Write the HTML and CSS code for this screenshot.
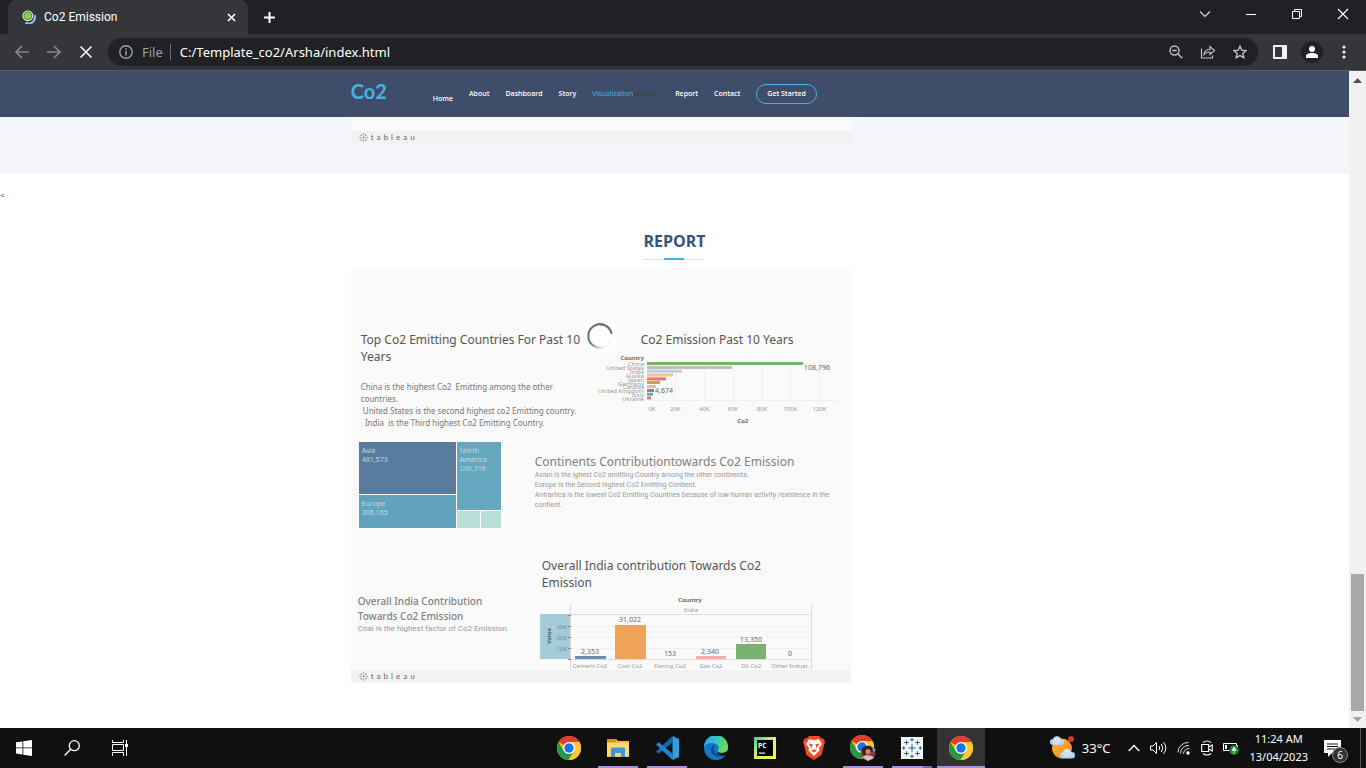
FILE: index.html
```html
<!DOCTYPE html>
<html lang="en">
<head>
<meta charset="utf-8">
<title>Co2 Emission</title>
<link rel="stylesheet" href="styles.css">
</head>
<body>
<svg width="0" height="0" class="defs" aria-hidden="true">
  <defs>
    <symbol id="chrome" viewBox="0 0 24 24">
      <circle cx="12" cy="12" r="12" fill="#fbc116"/>
      <path d="M12 12 1.6 6A12 12 0 0 1 22.4 6H12Z" fill="#e33b2e"/>
      <path d="M1.6 6A12 12 0 0 0 11.5 24L17.2 15 12 12 6.8 15Z" fill="#229a46"/>
      <path d="M22.4 6H12l5.2 9-5.7 9A12 12 0 0 0 22.4 6Z" fill="#fcc934"/>
      <circle cx="12" cy="12" r="6" fill="#fff"/>
      <circle cx="12" cy="12" r="4.7" fill="#1a73e8"/>
    </symbol>
    <symbol id="tableau" viewBox="0 0 24 24">
      <path d="M12 8v8M8 12h8M12 1v4M10 3h4M12 19v4M10 21h4M1 12h4M3 10v4M19 12h4M21 10v4M6 3.500v5M3.500 6h5M18 3.500v5M15.500 6h5M6 15.500v5M3.500 18h5M18 15.500v5M15.500 18h5" fill="none" stroke="currentColor" stroke-width="1.200"/>
    </symbol>
  </defs>
</svg>

<div class="tabstrip">
  <div class="tab">
    <svg class="favicon" viewBox="0 0 14 14"><path d="M12.500 5A6.300 6.300 0 0 1 3.500 12.700" fill="none" stroke="#8ab4f8" stroke-width="2.200"/><circle cx="5.800" cy="5.800" r="5.400" fill="#fff"/><circle cx="5.800" cy="5.800" r="4.600" fill="#5aa02c"/><circle cx="5.800" cy="5.800" r="2.600" fill="#8fc63f" stroke="#cfe8a8" stroke-width=".6"/></svg>
    <span class="tab-title">Co2 Emission</span>
    <button class="icon-btn" aria-label="Close tab"><svg width="9" height="9" viewBox="0 0 9 9"><path d="M1 1l7 7M8 1l-7 7" stroke="#fff" stroke-width="1.600"/></svg></button>
  </div>
  <button class="icon-btn new-tab" aria-label="New tab"><svg width="13" height="13" viewBox="0 0 13 13"><path d="M6.500 1v11M1 6.500h11" stroke="#fff" stroke-width="2"/></svg></button>
  <div class="window-controls">
    <button class="icon-btn" aria-label="Search tabs"><svg width="12" height="12" viewBox="0 0 12 12"><path d="M1 3.500l5 5 5-5" fill="none" stroke="#ddd" stroke-width="1.100"/></svg></button>
    <button class="icon-btn" aria-label="Minimize"><svg width="12" height="12" viewBox="0 0 12 12"><path d="M1 6.500h10" stroke="#fff"/></svg></button>
    <button class="icon-btn" aria-label="Restore"><svg width="12" height="12" viewBox="0 0 12 12"><path d="M1.500 3.500h7v7h-7zM3.500 3.500v-2h7v7h-2" fill="none" stroke="#fff"/></svg></button>
    <button class="icon-btn" aria-label="Close"><svg width="12" height="12" viewBox="0 0 12 12"><path d="M1 1l10 10M11 1L1 11" stroke="#fff" stroke-width="1.200"/></svg></button>
  </div>
</div>

<div class="toolbar">
  <button class="icon-btn nav-btn" aria-label="Back"><svg width="16" height="16" viewBox="0 0 16 16"><path d="M15 8H2M8 2L2 8l6 6" fill="none" stroke="#85878a" stroke-width="1.700"/></svg></button>
  <button class="icon-btn nav-btn" aria-label="Forward"><svg width="16" height="16" viewBox="0 0 16 16"><path d="M1 8h13M8 2l6 6-6 6" fill="none" stroke="#85878a" stroke-width="1.700"/></svg></button>
  <button class="icon-btn nav-btn" aria-label="Stop"><svg width="14" height="14" viewBox="0 0 14 14"><path d="M1.500 1.500l11 11M12.500 1.500l-11 11" stroke="#f1f1f1" stroke-width="1.700"/></svg></button>
  <div class="omnibox">
    <svg width="14" height="14" viewBox="0 0 14 14"><circle cx="7" cy="7" r="6.200" fill="none" stroke="#9aa0a6" stroke-width="1.400"/><path d="M7 6v4.500M7 3.300v1.500" stroke="#9aa0a6" stroke-width="1.500"/></svg>
    <label class="scheme" for="address">File</label>
    <input id="address" class="address" type="text" value="C:/Template_co2/Arsha/index.html">
    <button class="icon-btn" aria-label="Zoom"><svg width="14" height="14" viewBox="0 0 14 14"><circle cx="5.500" cy="5.500" r="4.500" fill="none" stroke="#bdc1c6" stroke-width="1.400"/><path d="M3.300 5.500h4.400M9 9l4.200 4.200" stroke="#bdc1c6" stroke-width="1.500"/></svg></button>
    <button class="icon-btn" aria-label="Share"><svg width="16" height="14" viewBox="0 0 16 14"><path d="M1.500 3.500v9.500h11V10.500M4 9.500c.3-3.500 2.500-5 6-5V1.500l4.500 4-4.500 4V7C7.500 7 5.500 7.500 4 9.500Z" fill="none" stroke="#bdc1c6" stroke-width="1.200"/></svg></button>
    <button class="icon-btn" aria-label="Bookmark"><svg width="14" height="14" viewBox="0 0 14 14"><path d="M7 1.300l1.700 3.900 4.300.4-3.200 2.800 1 4.200L7 10.400l-3.800 2.200 1-4.200L1 5.600l4.300-.4Z" fill="none" stroke="#c8cacd" stroke-width="1.300"/></svg></button>
  </div>
  <button class="icon-btn side" aria-label="Side panel"><svg width="14" height="14" viewBox="0 0 14 14"><path d="M0 0h14v14H0zM2 2v10h7V2z" fill="#f1f3f4" fill-rule="evenodd"/></svg></button>
  <button class="icon-btn profile" aria-label="Profile"><svg width="12" height="12" viewBox="0 0 12 12"><circle cx="6" cy="3" r="3" fill="#fff"/><path d="M0 12V10c0-2 3-3 6-3s6 1 6 3v2z" fill="#fff"/></svg></button>
  <button class="icon-btn menu" aria-label="Menu"><svg width="4" height="14" viewBox="0 0 4 14"><circle cx="2" cy="2" r="1.600" fill="#f1f1f1"/><circle cx="2" cy="7" r="1.600" fill="#f1f1f1"/><circle cx="2" cy="12" r="1.600" fill="#f1f1f1"/></svg></button>
</div>

<div class="viewport">
  <div class="page">
    <header class="site-header">
      <div class="container header-row">
        <a class="logo" href="#">Co2</a>
        <nav class="site-nav">
          <a class="low" href="#">Home</a>
          <a href="#">About</a>
          <a href="#">Dashboard</a>
          <a href="#">Story</a>
          <span class="pair"><a class="active" href="#">Visualization</a><a class="ghost" href="#">Report</a></span>
          <a href="#">Report</a>
          <a href="#">Contact</a>
          <a class="cta" href="#">Get Started</a>
        </nav>
      </div>
    </header>

    <section class="previous">
      <div class="container">
        <div class="embed-tail">
          <div class="tableau-bar"><svg width="9" height="9"><use href="#tableau"/></svg><span>tableau</span></div>
        </div>
      </div>
    </section>

    <p class="stray">&lt;</p>

    <section class="report container">
      <h2 class="title">REPORT</h2>
      <div class="embed">
        <div class="row first">
          <div class="summary">
            <h3>Top Co2 Emitting Countries For Past 10 Years</h3>
            <p>China is the highest Co2&nbsp; Emitting among the other countries.<br>&nbsp;United States is the second highest co2 Emitting country.<br>&nbsp; India&nbsp; is the Third highest Co2 Emitting Country.</p>
          </div>
          <div class="countries">
            <h3>Co2 Emission Past 10 Years</h3>
            <svg class="chart" width="248" height="76" viewBox="594 351 248 76">
              <g stroke="#f0f0f0"><path d="M674.500 362v38M703.500 362v38M732.500 362v38M761.500 362v38M789.500 362v38M818.500 362v38M646 400.500h191"/></g>
              <g class="names" text-anchor="end">
                <text x="643" y="366">China</text><text x="643" y="370">United States</text><text x="643" y="374">India</text><text x="643" y="378">Russia</text><text x="643" y="382">Japan</text><text x="643" y="386">Germany</text><text x="643" y="389">Canada</text><text x="643" y="393">United Kingdom</text><text x="643" y="397">Italy</text><text x="643" y="401">Ukraine</text>
                <text class="strong" x="643" y="360">Country</text>
              </g>
              <rect x="646" y="362" width="156" height="3" fill="#77b070"/>
              <rect x="646" y="366" width="85" height="3" fill="#c6bdb8"/>
              <rect x="646" y="369.700" width="35" height="3" fill="#b3d1ea"/>
              <rect x="646" y="373.500" width="26" height="3" fill="#fbc48c"/>
              <rect x="646" y="377.400" width="19" height="3" fill="#e77378"/>
              <rect x="646" y="381" width="13" height="3" fill="#c2a453"/>
              <rect x="646" y="385" width="9" height="3" fill="#dcc0b4"/>
              <rect x="646" y="389" width="7" height="3" fill="#8c8784"/>
              <rect x="646" y="392.700" width="6" height="3" fill="#6aa9a5"/>
              <rect x="646" y="396.500" width="4" height="3" fill="#e77378"/>
              <g class="values"><text x="803" y="370">108,796</text><text x="654" y="393">4,674</text></g>
              <g class="names" text-anchor="middle"><text x="651" y="411">0K</text><text x="674.500" y="411">20K</text><text x="703.500" y="411">40K</text><text x="732" y="411">60K</text><text x="761" y="411">80K</text><text x="789.500" y="411">100K</text><text x="818.500" y="411">120K</text><text class="strong" x="742" y="423">Co2</text></g>
            </svg>
          </div>
        </div>

        <div class="row second">
          <div class="treemap">
            <div class="asia">Asia<br>481,573</div>
            <div class="europe">Europe<br>306,165</div>
            <div class="america">North<br>America<br>290,316</div>
            <div class="small"></div>
            <div class="small"></div>
          </div>
          <div class="continents">
            <h3>Continents Contributiontowards Co2 Emission</h3>
            <p>Asian is the ighest Co2 emitting Country among the other continents.<br>Europe is the Second highest Co2 Emitting Contient.<br>Antrartica is the lowest Co2 Emitting Countries because of low human activity /existence in the contient.</p>
          </div>
        </div>

        <div class="row third">
          <div class="coal">
            <h3>Overall India Contribution Towards Co2 Emission</h3>
            <p>Coal is the highest factor of Co2 Emission.</p>
          </div>
          <div class="india">
            <h3>Overall India contribution Towards Co2 Emission</h3>
            <svg class="chart" width="280" height="75" viewBox="540 595 280 75">
              <rect x="540" y="614" width="31" height="45" fill="#a3ccd8"/>
              <path d="M571 626.500h240M571 637.500h240M571 648.500h240" stroke="#f0f0f0"/>
              <path d="M570.500 604v66M811.500 604v66M571 614.500h240M571 659.500h240" stroke="#dcdcdc" fill="none"/>
              <path d="M568 615.500h3M568 626.500h3M568 637.500h3M568 648.500h3M568 659.500h3" stroke="#888"/>
              <rect x="575" y="656" width="31" height="3" fill="#6a8db5"/>
              <rect x="615" y="625" width="31" height="34" fill="#f0a35b"/>
              <rect x="696" y="656" width="30" height="3" fill="#f8aaa8"/>
              <rect x="736" y="644" width="30" height="15" fill="#79b173"/>
              <g class="values" text-anchor="middle"><text x="590" y="654">2,353</text><text x="630" y="622">31,022</text><text x="670" y="656">153</text><text x="710" y="654">2,340</text><text x="751" y="642">13,350</text><text x="790" y="656">0</text></g>
              <g class="names" text-anchor="middle"><text x="590" y="668">Cement Co2</text><text x="630" y="668">Coal Co2</text><text x="670" y="668">Flaring Co2</text><text x="711" y="668">Gas Co2</text><text x="751" y="668">Oil Co2</text><text x="791" y="668">Other Indust..</text><text x="691" y="612">India</text><text class="strong" x="690" y="602">Country</text></g>
              <g class="ticks" text-anchor="end"><text x="567" y="629">30K</text><text x="567" y="640">20K</text><text x="567" y="651">10K</text></g>
              <text class="axis" text-anchor="middle" transform="translate(551 636) rotate(-90)">Value</text>
            </svg>
          </div>
        </div>
        <div class="tableau-bar"><svg width="9" height="9"><use href="#tableau"/></svg><span>tableau</span></div>
        <div class="loader"><svg width="26" height="26" viewBox="0 0 26 26"><defs><linearGradient id="fade" x1="0" y1="0" x2="1" y2="1"><stop offset=".45" stop-color="#6b7080"/><stop offset=".85" stop-color="#6b7080" stop-opacity=".05"/></linearGradient></defs><path d="M24.500 10A11.800 11.800 0 1 0 24.500 16" fill="none" stroke="url(#fade)" stroke-width="2"/><path d="M13 1.200A11.800 11.800 0 0 1 24.600 11" fill="none" stroke="#6b7080" stroke-width="2"/></svg></div>
      </div>
    </section>
  </div>
  <div class="scrollbar">
    <svg width="9" height="5" viewBox="0 0 9 5"><path d="M0 5l4.500-5L9 5z" fill="#505050"/></svg>
    <div class="track"><div class="thumb"></div></div>
    <svg width="9" height="5" viewBox="0 0 9 5"><path d="M0 0l4.500 5L9 0z" fill="#a3a3a3"/></svg>
  </div>
</div>

<div class="taskbar">
  <button class="task" aria-label="Start"><svg width="16" height="16" viewBox="0 0 16 16"><path d="M0 2.300l6.500-.9v6.100H0zM7.300 1.300L16 0v7.500H7.300zM0 8.300h6.500v6.200L0 13.600zM7.300 8.300H16V16l-8.700-1.300z" fill="#fff"/></svg></button>
  <button class="task" aria-label="Search"><svg width="16" height="16" viewBox="0 0 16 16"><circle cx="10.300" cy="5.700" r="5" fill="none" stroke="#fff" stroke-width="1.300"/><path d="M6.700 9.300L.6 15.400" stroke="#fff" stroke-width="1.400"/></svg></button>
  <button class="task" aria-label="Task view"><svg width="17" height="16" viewBox="0 0 17 16"><path d="M.5 0v2.500h11V0M.5 4.500h11v6H.5zM.5 16v-3.500h11V16M14.500 0v16" fill="none" stroke="#fff"/><path d="M13 4h3v3h-3z" fill="#fff"/></svg></button>
  <div class="apps">
    <button class="task" aria-label="Chrome"><svg width="24" height="24"><use href="#chrome"/></svg></button>
    <button class="task open" aria-label="File Explorer"><svg width="24" height="24" viewBox="0 0 24 24"><path d="M1 3h9l2 2h11v16H1z" fill="#f5bd3d"/><path d="M1 3h9v3H1z" fill="#d99413"/><path d="M1 7h22v13H1z" fill="#fdd76f"/><path d="M5 21v-8q0-1.500 1.500-1.500h11Q19 11.500 19 13v8h-4v-4H9v4z" fill="#3a96dd"/></svg></button>
    <button class="task open" aria-label="Visual Studio Code"><svg width="24" height="24" viewBox="0 0 24 24"><path d="M17.500 0v6.500L3.500 17.700 1 15.500z" fill="#0a69b2"/><path d="M17.500 24v-6.500L3.500 6.300 1 8.500z" fill="#1c86d0"/><path d="M17.500 0L24 3v18l-6.500 3z" fill="#2c9fe8"/></svg></button>
    <button class="task" aria-label="Edge"><svg width="24" height="24" viewBox="0 0 24 24"><defs><linearGradient id="edge" x2="1" y2=".3"><stop stop-color="#279fe0"/><stop offset=".5" stop-color="#32c3cd"/><stop offset="1" stop-color="#67db56"/></linearGradient></defs><circle cx="12" cy="12" r="12" fill="#1677c8"/><path d="M0 11A12 12 0 0 1 24 11c0 4-3 6-6.500 6-3 0-4.500-1.200-3.500-2.500C16.500 11 13 7 8 7 4 7 1 9 0 11z" fill="url(#edge)"/><path d="M9 9c-5 5-1 12 6 12 3 0 5.500-1 7-2-1-1-4 1-7.500-.5C10.500 17 9 13 11 10z" fill="#0d4f9e"/><path d="M14 14.500c-1 1.500.5 2.500 3.500 2.500 3 0 5-1.200 6.500-3v5c-2 1-6 1-8 0-2.500-1-3.500-3-2-4.500z" fill="#111"/></svg></button>
    <button class="task" aria-label="PyCharm"><svg width="22" height="22" viewBox="0 0 22 22"><defs><linearGradient id="pc" x2="1" y2="1"><stop stop-color="#21d789"/><stop offset=".45" stop-color="#d8f25a"/><stop offset="1" stop-color="#fcf84a"/></linearGradient></defs><path d="M0 0h22v22H0z" fill="url(#pc)"/><path d="M3 3h16v16H3z"/><text class="pc" x="4" y="11">PC</text><path d="M5 15.500h6v1.200H5z" fill="#fff"/></svg></button>
    <button class="task" aria-label="Brave"><svg width="22" height="24" viewBox="0 0 22 24"><path d="M6 0h10l2 2.300 2.300.2L22 6l-1 3-2.500 10L11 24l-7.500-5L1 9 0 6l1.700-3.500L4 2.300z" fill="#fb4a22"/><path d="M11 4l5-.8L19 8l-3 4 .6 2.500L11 20l-5.600-5.500L6 12 3 8l3-4.800z" fill="#fff"/><path d="M5.500 7.500l4 .8-.8 4zM16.500 7.500l-4 .8.8 4zM8 14.500l3-1.200 3 1.200-3 2zM11 4.500v3" fill="#fb4a22"/></svg></button>
    <button class="task open" aria-label="Chrome profile"><svg width="26" height="26" viewBox="0 0 26 26"><use href="#chrome" width="24" height="24"/><circle cx="18" cy="18" r="7.500" fill="#7b4637"/><path d="M12 14c2-4 8-4 11 0l-1 3-5-1-3 6z" fill="#30191a"/><circle cx="18" cy="16.500" r="2.600" fill="#c98a6c"/><path d="M12 22l4-2 6 1 2 2-6 3z" fill="#e8b4ba"/><path d="M22 13l4 1-2 3z" fill="#7da5d8"/></svg></button>
    <button class="task open stacked" aria-label="Tableau"><svg class="tableau-app" width="22" height="22"><use href="#tableau"/></svg></button>
    <button class="task open current" aria-label="Chrome, current"><svg width="24" height="24"><use href="#chrome"/></svg></button>
  </div>
  <div class="tray">
    <svg width="25" height="24" viewBox="0 0 25 24"><defs><linearGradient id="sun" x2="1" y2="1"><stop stop-color="#fdc03b"/><stop offset="1" stop-color="#ee7b18"/></linearGradient></defs><circle cx="12" cy="12.500" r="10" fill="url(#sun)"/><rect x="0" y="3" width="14" height="6" rx="3" fill="#b9d2f3"/><circle cx="7" cy="4.500" r="4.300" fill="#cfe0f8"/><rect x="10" y="16" width="15" height="6.500" rx="3.200" fill="#b5cff2"/><circle cx="17" cy="17" r="4.300" fill="#cfe0f8"/><circle cx="21" cy="3" r="3" fill="#cf3b27"/></svg>
    <span class="temp">33°C</span>
    <svg width="12" height="8" viewBox="0 0 12 8"><path d="M.7 7L6 1.500 11.300 7" fill="none" stroke="#fff" stroke-width="1.300"/></svg>
    <svg width="17" height="14" viewBox="0 0 17 14"><path d="M.5 5v4H3l3.500 3.500v-11L3 5zM9 5q1.500 2 0 4M11.300 3q3 4 0 8M13.600 1.300q4.500 5.700 0 11.400" fill="none" stroke="#fff"/></svg>
    <svg width="14" height="14" viewBox="0 0 14 14"><path d="M1 11.500A10 10 0 0 1 11.500 1.500M3.500 12.500a8 8 0 0 1 8.500-8M6.500 13a5.500 5.500 0 0 1 6-5.500" fill="none" stroke="#ddd"/><circle cx="11" cy="12" r="1.800" fill="#fff"/></svg>
    <svg width="12" height="16" viewBox="0 0 12 16"><path d="M2 2.500q4-3 8 0M2 13.500q4 3 8 0M.7 4.500h7v7h-7zM7.700 7l3.500-2v6l-3.500-2" fill="none" stroke="#fff" stroke-width="1.100"/></svg>
    <svg width="16" height="13" viewBox="0 0 16 13"><path d="M.5 1.500h13v7H.5zM14.500 3.500v3" fill="none" stroke="#fff"/><path d="M2 3h2v4H2z" fill="#fff"/><circle cx="11" cy="8" r="4.800" fill="#118a2d"/><path d="M11 12V6M9 8.500L11 5l2 3.500z" stroke="#fff" stroke-width=".8" fill="#fff"/></svg>
    <div class="clock">11:24 AM<br>13/04/2023</div>
    <div class="notice"><svg width="17" height="17" viewBox="0 0 17 17"><path d="M0 0h17v13H8l-4 4v-4H0z" fill="#fff"/><path d="M3 4h11M3 6.500h11M3 9h8" stroke="#111"/></svg><span class="count">6</span></div>
  </div>
</div>
</body>
</html>
```
FILE: styles.css
```css
* { box-sizing: border-box; }
body {
  margin: 0;
  height: 100vh;
  display: flex;
  flex-direction: column;
  overflow: hidden;
  font-family: "Open Sans", "Noto Sans", sans-serif;
  background: #fff;
}
h2, h3, p { margin: 0; font-weight: 400; }
a { text-decoration: none; color: inherit; }
svg { display: block; flex: none; }
.defs { position: absolute; }
.icon-btn, .task {
  display: flex;
  align-items: center;
  justify-content: center;
  padding: 0;
  border: 0;
  background: none;
}

/* browser chrome */
.tabstrip { flex: none; height: 34px; display: flex; align-items: center; background: #202124; padding-left: 8px; }
.tab {
  align-self: stretch;
  width: 240px;
  display: flex;
  align-items: center;
  padding: 0 12px 0 14px;
  gap: 8px;
  background: #35363a;
  border-radius: 8px 8px 0 0;
  color: #fff;
}
.favicon { width: 14px; height: 14px; }
.tab-title { flex: 1; font-size: 12px; font-family: Roboto, sans-serif; }
.new-tab { margin-left: 15px; }
.window-controls { margin-left: auto; display: flex; gap: 34px; padding: 0 17px 6px 0; }
.toolbar {
  flex: none;
  height: 37px;
  display: flex;
  align-items: center;
  padding: 0 14px;
  background: #35363a;
  border-bottom: 1px solid #5b5c5f;
}
.nav-btn { width: 16px; margin-right: 16px; }
.omnibox {
  flex: 1;
  height: 28px;
  margin-left: -2px;
  padding: 0 10px 0 11px;
  display: flex;
  align-items: center;
  gap: 9px;
  border-radius: 14px;
  background: #202124;
  color: #fff;
  font-family: "Noto Sans", sans-serif;
  font-size: 13px;
}
.omnibox .icon-btn { width: 16px; margin-left: 7px; }
.scheme { color: #9aa0a6; padding-right: 7px; border-right: 1px solid #6b6d70; line-height: 16px; }
.address { flex: 1; min-width: 0; padding: 0; border: 0; background: none; color: inherit; font: inherit; }
.side { margin-left: 15px; }
.profile { width: 22px; height: 22px; margin-left: 14px; border-radius: 50%; background: #202124; }
.menu { width: 4px; margin: 0 6px 0 19px; }

/* page */
.viewport { flex: 1; min-height: 0; display: flex; }
.page { flex: 1; min-width: 0; overflow: hidden; background: #fff; }
.container { width: 48%; margin: 0 auto; }
.site-header { height: 46px; background: #3e4d6a; }
.header-row { display: flex; align-items: flex-start; color: #fff; padding-top: 8px; }
.logo { width: 82px; font: 700 20px/24px Lato, sans-serif; color: #47b2e4; }
.site-nav { display: flex; align-items: center; gap: 16px; padding-top: 5px; font-size: 7px; line-height: 10px; font-weight: 600; white-space: nowrap; }
.low { padding-top: 10px; }
.pair { display: flex; margin-right: 3px; }
.active { color: #47b2e4; font-weight: 400; }
.ghost { color: #444; }
.cta { padding: 4px 10px; border: 1px solid #47b2e4; border-radius: 10px; }
.previous { height: 57px; background: #f3f5fa; }
.embed-tail { width: 500px; padding-top: 14px; background: #fafafa; }
.tableau-bar {
  height: 13px;
  padding: 0 0 1px 8px;
  display: flex;
  align-items: center;
  gap: 3px;
  background: #f2f2f2;
  color: #666;
  font: 400 8px/12px Lato, sans-serif;
  letter-spacing: 3px;
}
.stray { font-size: 8px; line-height: 12px; color: #444; padding-top: 15px; }
.title {
  width: 64px;
  margin: 30px auto 10px;
  padding-bottom: 9px;
  font-size: 16px;
  line-height: 20px;
  font-weight: 700;
  color: #37517e;
  text-align: center;
  background: linear-gradient(#47b2e4, #47b2e4) 50% 100% / 20px 2px no-repeat, linear-gradient(#ddd, #ddd) 50% 100% / 60px 1px no-repeat;
}
.embed { position: relative; width: 500px; background: #fafafa; color: #555; font-family: "Noto Sans", sans-serif; }
.embed h3 { font-size: 12px; line-height: 17px; color: #555; }
.embed p { font: 7px/10px Roboto, sans-serif; color: #999; }
.row { display: flex; align-items: flex-start; }
.first { height: 172px; padding: 61px 10px 0; }
.summary { flex: none; width: 234px; }
.embed .summary p { width: 220px; margin-top: 16px; font: 8px/12px "Noto Sans", sans-serif; color: #777; }
.countries h3 { margin-left: 46px; }
.chart { font-family: "Noto Sans", sans-serif; font-size: 6px; margin-top: 3px; }
.names { fill: #999; }
.values { fill: #666; font-size: 7px; }
.strong { fill: #555; font-weight: 600; }
.ticks { fill: #6f8d96; }
.axis { fill: #456; font-weight: 600; }
.second { height: 112px; padding-left: 8px; gap: 33px; }
.treemap {
  width: 143px;
  height: 86px;
  display: grid;
  grid-template-columns: 97px 23px 20px;
  grid-template-rows: 52px 15px 17px;
  gap: 1px;
  font-size: 7px;
  line-height: 9px;
  color: #c4d7e2;
}
.treemap div { padding: 4px 3px; }
.asia { background: #587b9e; }
.europe { grid-row: 2 / 4; grid-column: 1; background: #61a3bc; }
.america { grid-row: 1 / 3; grid-column: 2 / 4; background: #64a7bf; }
.small { grid-row: 3; background: #b8ded8; }
.continents { width: 305px; padding-top: 11px; }
.embed .continents h3, .embed .coal h3 { color: #808080; }
.third { height: 116px; padding-left: 7px; }
.coal { width: 182px; padding-top: 40px; }
.embed .coal h3 { width: 140px; font-size: 10px; line-height: 15px; font-weight: 500; }
.embed .coal p { font-size: 8px; }
.india { padding-top: 3px; }
.india h3 { width: 240px; margin-left: 2px; }
.india .chart { margin-top: 4px; }
.loader {
  position: absolute;
  top: 50px;
  left: 233px;
  width: 33px;
  height: 32px;
  display: flex;
  align-items: center;
  justify-content: center;
  border-radius: 6px;
  background: #fff;
}
.scrollbar { flex: none; width: 17px; display: flex; flex-direction: column; align-items: center; padding: 7px 0 6px; background: #f1f1f1; }
.track { flex: 1; width: 13px; margin: 5px 0 6px; display: flex; flex-direction: column; justify-content: flex-end; }
.thumb { height: 22%; background: #a8a8a8; }

/* taskbar */
.taskbar { flex: none; height: 40px; display: flex; align-items: center; background: #101010; color: #fff; }
.task { width: 48px; height: 40px; }
.apps { display: flex; gap: 1px; margin-left: auto; }
.open { background: linear-gradient(#b18be0, #b18be0) 50% 100% / 40px 2px no-repeat; }
.stacked { background: linear-gradient(90deg, #b18be0 31px, #8563ac 31px) 50% 100% / 40px 2px no-repeat; }
.current { background: linear-gradient(#b18be0, #b18be0) 50% 100% / 48px 2px no-repeat #333; }
.tableau-app { background: #f4f6f8; color: #2c6590; }
.pc { fill: #fff; font: 700 7px "DejaVu Sans Mono", monospace; }
.tray { display: flex; align-items: center; align-self: stretch; margin-left: 65px; gap: 10px; padding-right: 5px; font-family: "Noto Sans", sans-serif; }
.temp { font-size: 13px; margin: 0 8px 0 -3px; }
.clock { font-size: 11px; line-height: 18px; text-align: center; white-space: nowrap; }
.notice { position: relative; display: flex; align-items: center; align-self: stretch; padding: 0 19px 0 6px; border-right: 1px solid #555; }
.count {
  position: absolute;
  left: 14px;
  top: 19px;
  width: 16px;
  height: 16px;
  border: 1px solid #888;
  border-radius: 50%;
  background: #333;
  font-size: 10px;
  line-height: 14px;
  text-align: center;
}
```
